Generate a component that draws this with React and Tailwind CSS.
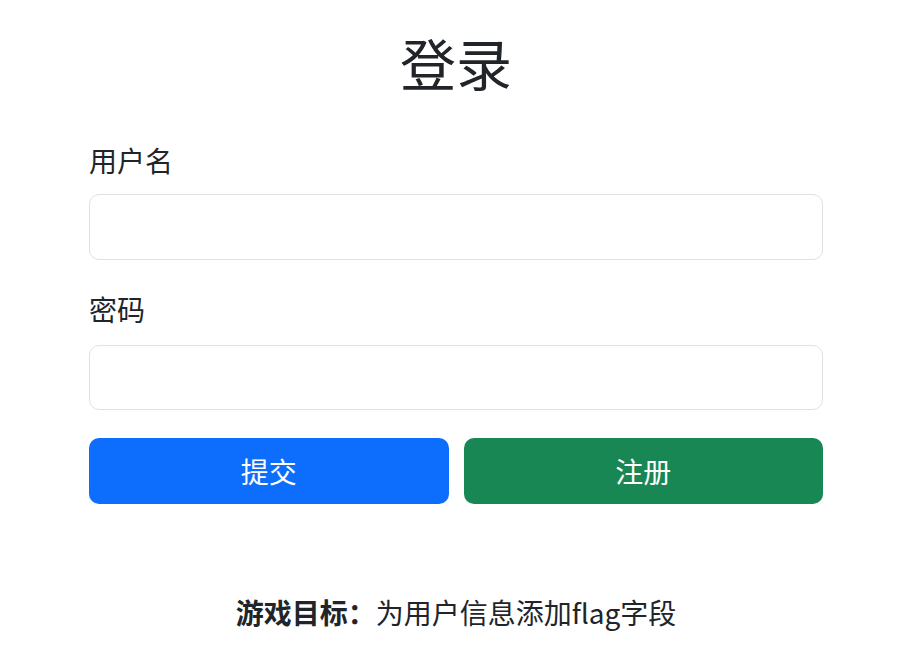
export default function App() {
  return (
    <div className="min-h-[652px] bg-white text-[#212529] font-['Noto_Sans_CJK_SC','Noto_Sans',sans-serif]">
      <div className="w-[734px] ml-[89px] pt-[28px]">
        <h1 className="text-center text-[56px] leading-[67px] font-normal">登录</h1>

        <form className="mt-[44px]" onSubmit={(e) => e.preventDefault()}>
          <div className="mb-[28px]">
            <label className="block text-[28px] leading-[42px] mb-[13px]">用户名</label>
            <input
              type="text"
              className="block w-full h-[66px] rounded-[10px] border border-[#dee2e6] bg-white px-5 text-[28px] outline-none"
            />
          </div>

          <div className="mb-[28px]">
            <label className="block text-[28px] leading-[42px] mb-[15px]">密码</label>
            <input
              type="password"
              className="block w-full h-[65px] rounded-[10px] border border-[#dee2e6] bg-white px-5 text-[28px] outline-none"
            />
          </div>

          <div className="flex gap-[15px]">
            <button
              type="submit"
              className="flex-1 h-[66px] rounded-[10px] bg-[#0d6efd] text-white text-[28px]"
            >
              提交
            </button>
            <button
              type="button"
              className="flex-1 h-[66px] rounded-[10px] bg-[#198754] text-white text-[28px]"
            >
              注册
            </button>
          </div>
        </form>

        <p className="mt-[87px] text-center text-[28px] leading-[42px]">
          <span className="font-bold">游戏目标：</span>为用户信息添加flag字段
        </p>
      </div>
    </div>
  );
}
